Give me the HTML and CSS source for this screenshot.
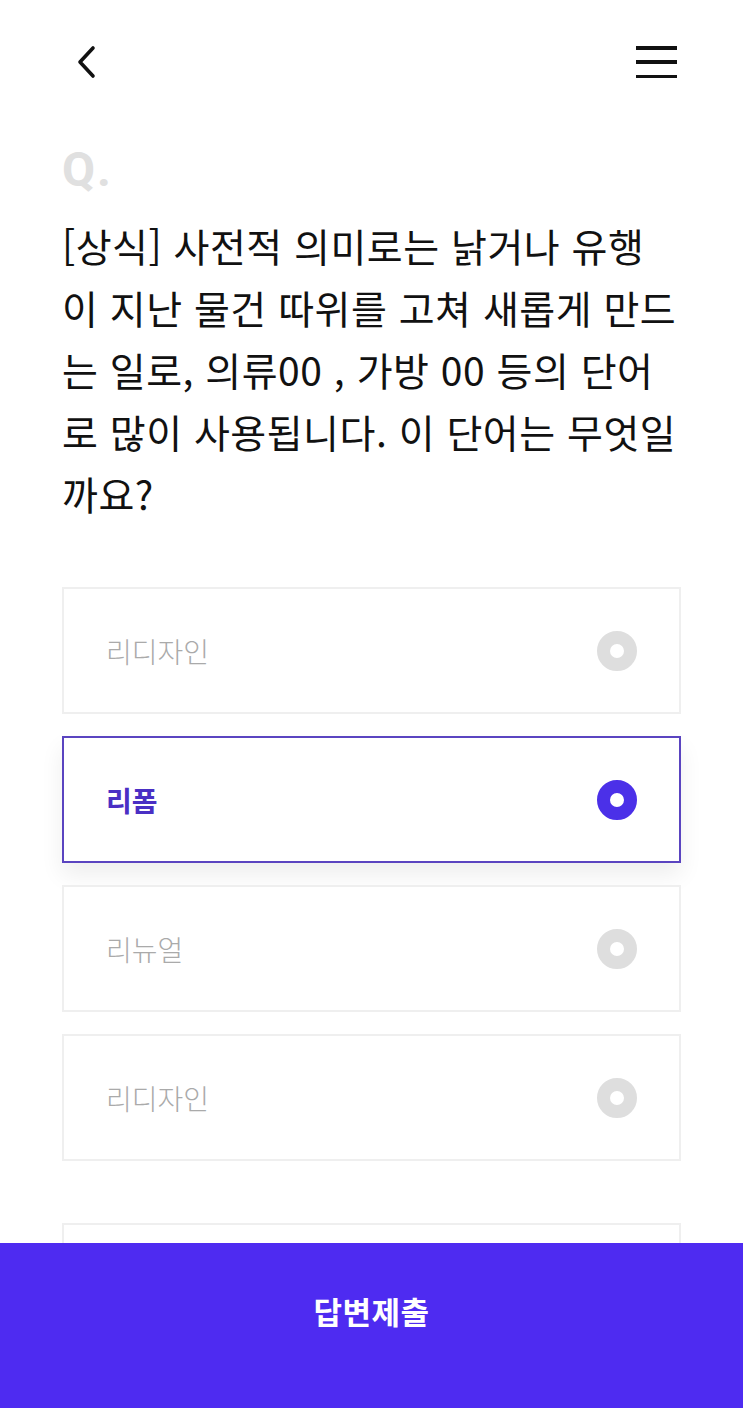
FILE: index.html
```html
<!doctype html>
<html lang="ko">
<head>
  <meta charset="UTF-8">
  <title>퀴즈</title>
  <link rel="stylesheet" href="styles.css">
</head>
<body>
  <div class="top">
    <a class="back" href="#">
      <svg width="22" height="34" viewBox="0 0 22 34"><path d="M17 3 L4 17 L17 31" fill="none" stroke="#111" stroke-width="3.6" stroke-linecap="round" stroke-linejoin="round"/></svg>
    </a>
    <a class="menu" href="#"><span></span><span></span><span></span></a>
  </div>

  <div class="quiz">
    <div class="q">Q.</div>
    <p class="question">[상식] 사전적 의미로는 낡거나 유행<br>이 지난 물건 따위를 고쳐 새롭게 만드<br>는 일로, 의류00 , 가방 00 등의 단어<br>로 많이 사용됩니다. 이 단어는 무엇일<br>까요?</p>

    <ul class="answers">
      <li><span class="txt">리디자인</span><i class="radio"></i></li>
      <li class="on"><span class="txt">리폼</span><i class="radio"></i></li>
      <li><span class="txt">리뉴얼</span><i class="radio"></i></li>
      <li><span class="txt">리디자인</span><i class="radio"></i></li>
      <li class="more"><span class="txt">리사이클</span><i class="radio"></i></li>
    </ul>
  </div>

  <button class="submit">답변제출</button>
</body>
</html>
```

FILE: styles.css
```css
*{margin:0;
  padding:0;
  list-style:none;
  box-sizing:border-box;}
body{background:#fff;
     font-family:"Noto Sans CJK KR","Noto Sans",sans-serif;
     color:#111;}
.top{height:124px;
     display:flex;
     align-items:center;
     justify-content:space-between;
     padding:0 66px 0 76px;}
.back{display:block; width:22px; height:34px;}
.back svg{display:block;}
.menu{display:flex;
      flex-direction:column;
      justify-content:space-between;
      width:41px; height:32px;}
.menu span{display:block; height:3.5px; background:#111;}

.quiz{padding:0 62px;}
.q{font-family:Roboto,"Noto Sans",sans-serif;
   font-weight:700;
   font-size:48px;
   line-height:48px;
   color:#e0e0e0;
   margin-top:22px;
   letter-spacing:2px;}
.question{font-size:39px;
          font-weight:400;
          line-height:62px;
          letter-spacing:0.5px;
          margin-top:20px;
          color:#111;
          white-space:nowrap;}
.answers{margin-top:63px;}
.answers li{height:127px;
            border:2px solid #efefef;
            display:flex;
            align-items:center;
            justify-content:space-between;
            padding:0 42px;
            margin-bottom:22px;
            background:#fff;}
.answers .txt{font-size:28px;
              font-weight:300;
              color:#aaa;}
.radio{width:40px; height:40px;
       border-radius:50%;
       border:13.5px solid #dedede;
       background:#fff;}
.answers li.on{border-color:#5a44c0;
               box-shadow:0 12px 22px rgba(0,0,0,0.07);}
.answers li.on .txt{color:#4a2fc4; font-weight:700;}
.answers li.on .radio{border-color:#4b30e8;}
.answers li.more{margin:62px 0 0;}

.submit{position:fixed;
        left:0; bottom:0;
        width:100%; height:165px;
        padding-bottom:30px;
        border:0;
        background:#4e2bf1;
        color:#fff;
        font-family:"Noto Sans CJK KR",sans-serif;
        font-size:31px;
        font-weight:700;
        letter-spacing:0.5px;}
```
